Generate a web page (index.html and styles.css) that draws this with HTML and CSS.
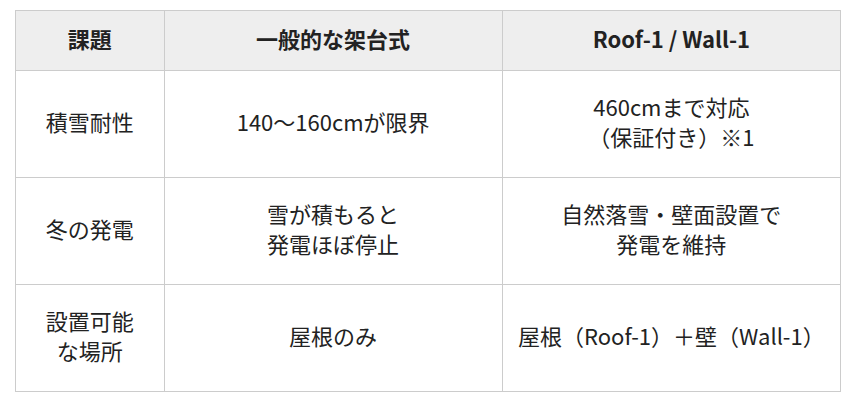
FILE: index.html
```html
<!DOCTYPE html>
<html lang="ja">
<head>
<meta charset="utf-8">
<link rel="stylesheet" href="styles.css">
</head>
<body>
<div class="wrap">
<table class="cmp">
  <colgroup><col class="c1"><col class="c2"><col class="c3"></colgroup>
  <thead>
    <tr><th>課題</th><th>一般的な架台式</th><th>Roof-1 / Wall-1</th></tr>
  </thead>
  <tbody>
    <tr><td>積雪耐性</td><td>140〜160cmが限界</td><td>460cmまで対応<br>（保証付き）※1</td></tr>
    <tr><td>冬の発電</td><td>雪が積もると<br>発電ほぼ停止</td><td>自然落雪・壁面設置で<br>発電を維持</td></tr>
    <tr><td>設置可能<br>な場所</td><td>屋根のみ</td><td>屋根（Roof-1）＋壁（Wall-1）</td></tr>
  </tbody>
</table>
</div>
</body>
</html>
```
FILE: styles.css
```css
html, body { margin: 0; padding: 0; background: #fff; }
.wrap { padding: 10px 0 0 15px; }
.cmp {
  width: 826px;
  border-collapse: collapse;
  table-layout: fixed;
  font-family: "Noto Sans CJK JP", "Noto Sans", sans-serif;
  font-size: 22px;
  line-height: 30px;
  color: #222;
}
.c1 { width: 18%; }
.c2 { width: 41%; }
.c3 { width: 41%; }
.cmp th, .cmp td {
  border: 1px solid #cccccc;
  text-align: center;
  vertical-align: middle;
}
.cmp th {
  background: #eeeeee;
  font-weight: 700;
  padding: 12px 10px 17px;
}
.cmp td {
  padding: 20px 10px 26px;
  height: 60px;
}
```
